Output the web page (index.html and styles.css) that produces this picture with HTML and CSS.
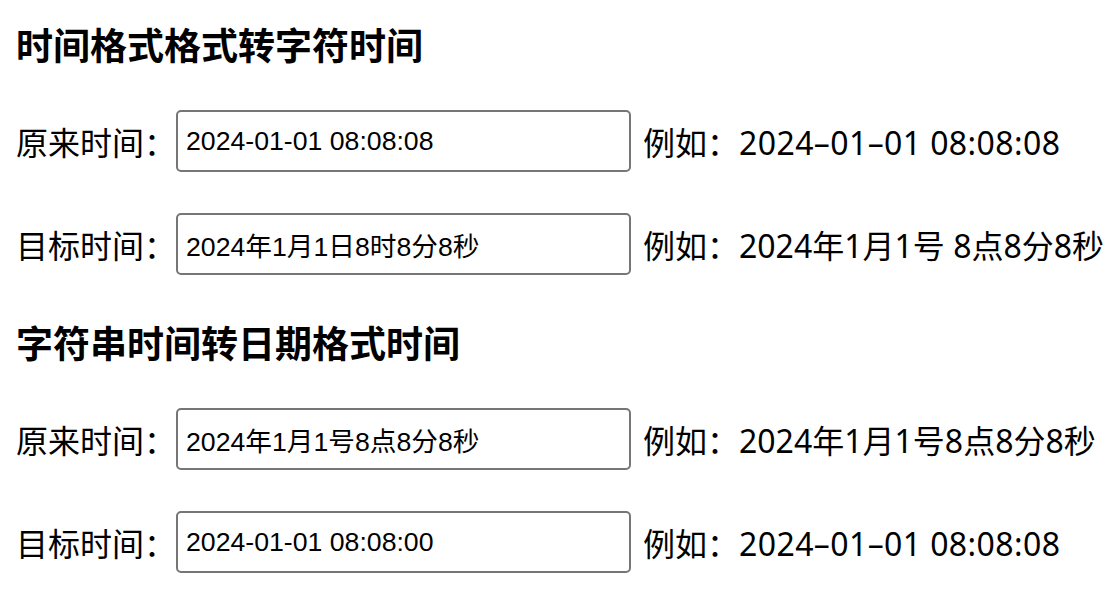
FILE: index.html
```html
<!DOCTYPE html>
<html lang="zh-CN">
<head>
  <meta charset="UTF-8">
  <meta name="viewport" content="width=device-width, initial-scale=1.0">
  <title>时间格式转换</title>
  <link rel="stylesheet" href="styles.css">
</head>
<body>
  <div class="page">
    <section class="block">
      <h3 class="title">时间格式格式转字符时间</h3>
      <div class="row">
        <label for="srcTime1">原来时间：</label>
        <input type="text" id="srcTime1" value="2024-01-01 08:08:08">
        <span class="hint">例如：<span class="sample sample-date">2024–01–01 08:08:08</span></span>
      </div>
      <div class="row">
        <label for="dstTime1">目标时间：</label>
        <input type="text" id="dstTime1" value="2024年1月1日8时8分8秒">
        <span class="hint">例如：<span class="sample">2024年1月1号 8点8分8秒</span></span>
      </div>
    </section>

    <section class="block">
      <h3 class="title">字符串时间转日期格式时间</h3>
      <div class="row">
        <label for="srcTime2">原来时间：</label>
        <input type="text" id="srcTime2" value="2024年1月1号8点8分8秒">
        <span class="hint">例如：<span class="sample">2024年1月1号8点8分8秒</span></span>
      </div>
      <div class="row">
        <label for="dstTime2">目标时间：</label>
        <input type="text" id="dstTime2" value="2024-01-01 08:08:00">
        <span class="hint">例如：<span class="sample sample-date">2024–01–01 08:08:08</span></span>
      </div>
    </section>
  </div>
</body>
</html>
```

FILE: styles.css
```css
body {
  margin: 0;
  font-family: "Noto Sans CJK SC", sans-serif;
  color: #000;
  background-color: #fff;
}

.page {
  padding: 18px 16px 0;
}

.title {
  margin: 0 0 40px;
  font-size: 37px;
  line-height: 52px;
  font-weight: bold;
}

.block + .block .title {
  margin-top: 2px;
}

.row {
  display: flex;
  align-items: center;
  height: 62px;
  margin-bottom: 41px;
  font-size: 32px;
  white-space: nowrap;
}

.block:last-child .row:last-child {
  margin-bottom: 0;
}

.row label {
  flex-shrink: 0;
  width: 160px;
}

.row input {
  flex-shrink: 0;
  box-sizing: border-box;
  width: 455px;
  height: 62px;
  padding: 0 8px;
  border: 2px solid #767676;
  border-radius: 5px;
  font-family: "Liberation Sans", "Noto Sans CJK SC", sans-serif;
  font-size: 26.67px;
  color: #000;
}

.hint {
  margin-left: 12px;
}

.sample {
  font-family: "Noto Sans", "Noto Sans CJK SC", sans-serif;
}

.sample-date {
  letter-spacing: 0.4px;
}
```
